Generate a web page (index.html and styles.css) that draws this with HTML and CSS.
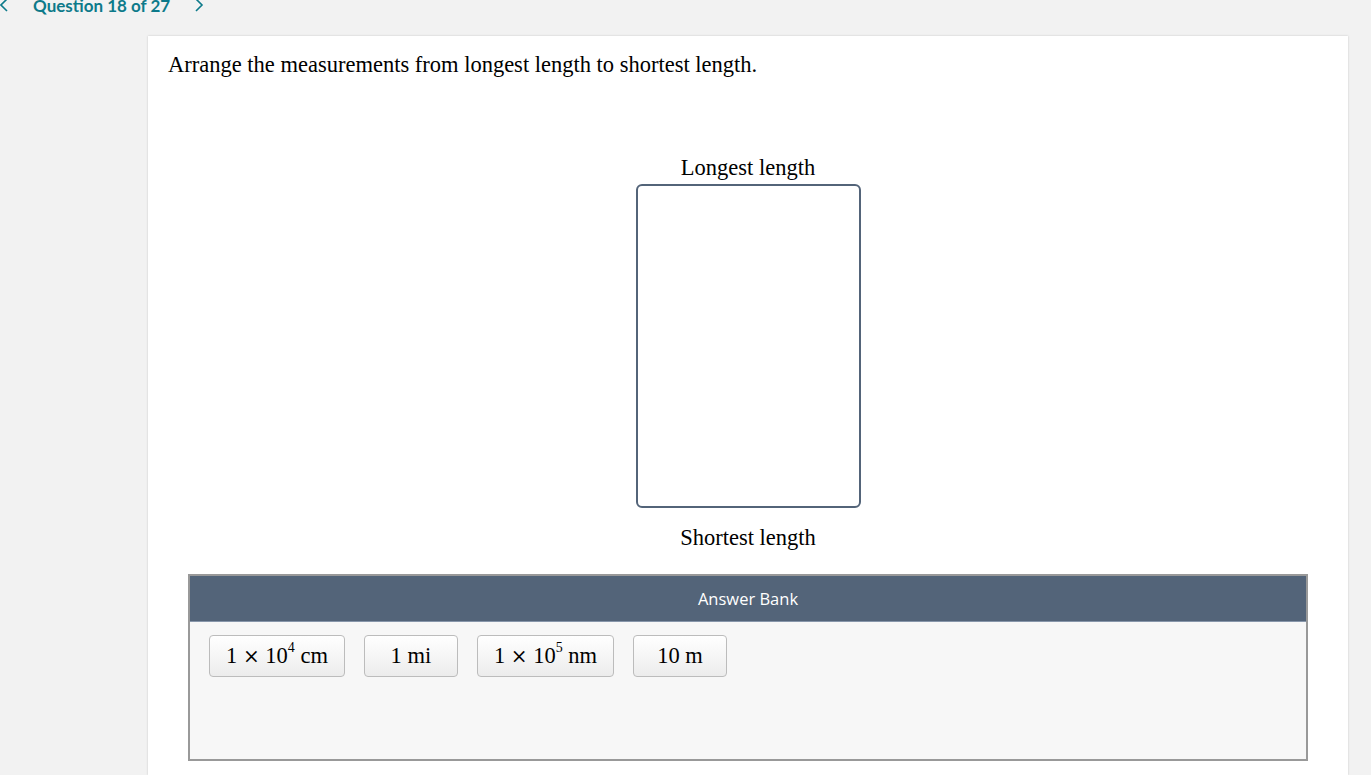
FILE: index.html
```html
<!DOCTYPE html>
<html>
<head>
<meta charset="utf-8">
<link rel="stylesheet" href="styles.css">
</head>
<body>
<div class="nav">
  <div class="nav-inner">
    <svg class="chev prev" width="10" height="14" viewBox="0 0 10 14"><path d="M8 1 L2 7 L8 13" fill="none" stroke="#0d7a8a" stroke-width="1.6"/></svg>
    <span class="qnum">Question 18 of 27</span>
    <svg class="chev next" width="10" height="14" viewBox="0 0 10 14"><path d="M2 1 L8 7 L2 13" fill="none" stroke="#0d7a8a" stroke-width="1.6"/></svg>
  </div>
</div>
<div class="card">
  <p class="prompt">Arrange the measurements from longest length to shortest length.</p>
  <div class="ranking">
    <div class="label top">Longest length</div>
    <div class="dropzone"></div>
    <div class="label bottom">Shortest length</div>
  </div>
  <div class="bank">
    <div class="bank-head">Answer Bank</div>
    <div class="bank-body">
      <div class="chip"><span>1 <span class="times">×</span> 10<sup>4</sup> cm</span></div>
      <div class="chip"><span>1 mi</span></div>
      <div class="chip"><span>1 <span class="times">×</span> 10<sup>5</sup> nm</span></div>
      <div class="chip"><span>10 m</span></div>
    </div>
  </div>
</div>
</body>
</html>
```
FILE: styles.css
```css
html, body {
  margin: 0;
  padding: 0;
  background: #f2f2f2;
  height: 100%;
  overflow: hidden;
}
.nav {
  height: 36px;
  display: flow-root;
}
.nav-inner {
  display: flex;
  align-items: center;
  margin-top: -7px;
  height: 24px;
  font-family: Lato, "Open Sans", sans-serif;
  font-weight: 700;
  font-size: 17px;
  color: #0d7a8a;
}
.chev.prev {
  margin-left: -1px;
}
.qnum {
  margin-left: 24px;
  margin-right: 24px;
}
.card {
  margin-left: 148px;
  width: 1200px;
  min-height: calc(100vh - 36px);
  background: #fff;
  box-shadow: 0 0 2px rgba(0,0,0,0.18);
  padding: 16px 20px 0;
  box-sizing: border-box;
  display: flow-root;
  font-family: "Liberation Serif", "Times New Roman", serif;
  color: #000;
}
.prompt {
  margin: 0;
  font-size: 22.5px;
}
.ranking {
  display: flex;
  flex-direction: column;
  align-items: center;
  margin-top: 77px;
}
.label {
  font-size: 22.5px;
}
.dropzone {
  width: 225px;
  height: 324px;
  box-sizing: border-box;
  border: 2px solid #536479;
  border-radius: 6px;
  margin-top: 3px;
  margin-bottom: 17px;
}
.bank {
  margin: 23px 20px 0;
  border: 2px solid #999;
}
.bank-head {
  height: 46px;
  box-sizing: border-box;
  background: #536479;
  border-bottom: 1px solid #8796aa;
  color: #fff;
  font-family: "Open Sans", sans-serif;
  font-size: 16.5px;
  display: flex;
  align-items: center;
  justify-content: center;
}
.bank-body {
  background: #f7f7f7;
  height: 137px;
  box-sizing: border-box;
  padding: 13px 19px;
  display: flex;
  align-items: flex-start;
  gap: 19px;
}
.chip {
  height: 42px;
  min-width: 94px;
  box-sizing: border-box;
  padding: 0 16px;
  border: 1px solid #bcbcbc;
  border-radius: 4px;
  background: linear-gradient(#ffffff, #ececec);
  display: flex;
  align-items: center;
  justify-content: center;
  font-size: 22.5px;
  white-space: nowrap;
}
.chip .times {
  font-family: "DejaVu Serif", serif;
  font-size: 20px;
}
.chip sup {
  font-size: 14px;
  line-height: 0;
  position: relative;
  top: -3px;
}
```
